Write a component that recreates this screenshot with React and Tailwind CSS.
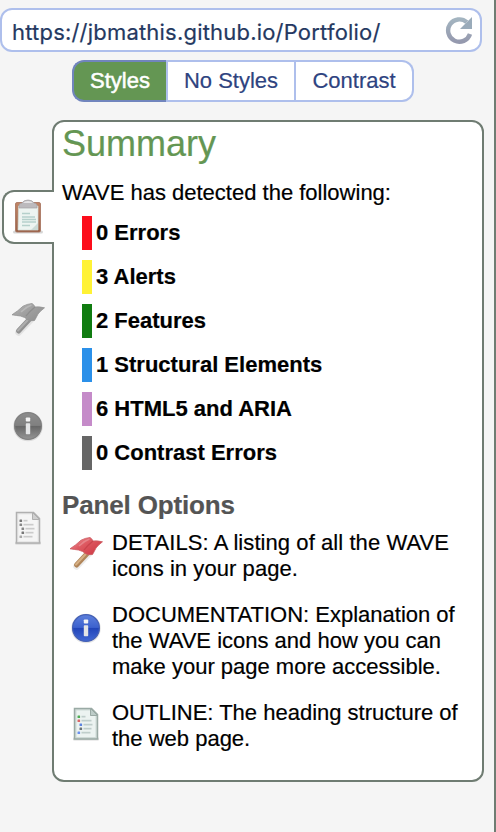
const stats = [
  { label: '0 Errors', color: 'bg-[#fc0d1b]' },
  { label: '3 Alerts', color: 'bg-[#fff235]' },
  { label: '2 Features', color: 'bg-[#107c10]' },
  { label: '1 Structural Elements', color: 'bg-[#2b90e9]' },
  { label: '6 HTML5 and ARIA', color: 'bg-[#c58bc9]' },
  { label: '0 Contrast Errors', color: 'bg-[#666666]' },
];

function Clipboard() {
  return (
    <svg width="32" height="36" viewBox="0 0 32 36">
      <defs>
        <linearGradient id="board" x1="0" y1="0" x2="0" y2="1">
          <stop offset="0" stopColor="#c18668" />
          <stop offset="1" stopColor="#9a6248" />
        </linearGradient>
      </defs>
      <rect x="1" y="31.500" width="30" height="3" rx="1.500" fill="#000" opacity=".16" />
      <rect x="3.500" y="3.500" width="25" height="29.500" rx="1.500" fill="url(#board)" stroke="#a5705a" strokeWidth=".8" />
      <path d="M6.500 7h19.500v24h-20z" fill="#edf4f1" stroke="#d5ddd9" strokeWidth=".7" />
      <path d="M26 24v7h-7z" fill="#cbdad6" />
      <path d="M7 9V6.500q0-2 3-2.500 1.500-3 6-3t6 3q3 .5 3 2.500V9z" fill="#bcbabd" stroke="#a5a1a4" strokeWidth=".7" />
      <path d="M11 4q1.500-2 5-2t5 2z" fill="#e4e3e5" />
      <path d="M10 14.500h8M10 18h13M10 20.500h14M10 23h14M10 26.500h8" stroke="#b5d0cb" strokeWidth="1.500" />
    </svg>
  );
}

function Flag({ gray = false }) {
  const id = gray ? 'flag-gray' : 'flag-red';
  return (
    <svg width="36" height="34" viewBox="0 0 36 34">
      <defs>
        <linearGradient id={id} x1="0" y1="0" x2="1" y2=".8">
          <stop offset="0" stopColor={gray ? '#bababa' : '#ef9a9e'} />
          <stop offset=".45" stopColor={gray ? '#a2a2a2' : '#de5a62'} />
          <stop offset="1" stopColor={gray ? '#909090' : '#cf3a45'} />
        </linearGradient>
      </defs>
      <path d="M8.500 30.500 23 15.500" stroke="#000" strokeWidth="6.500" strokeLinecap="round" opacity=".07" />
      <path d="M8.500 29 22 14.500" stroke={gray ? '#919191' : '#b08559'} strokeWidth="5" strokeLinecap="round" />
      <path d="M8 28.500 21 14.500" stroke={gray ? '#adadad' : '#d6b084'} strokeWidth="2" strokeLinecap="round" />
      <path d="M2 12.800Q8 9 13 4.200 17 2 22 1.500q2 1 3 3.500 4.500-.5 9.500.8-4 3-6.500 6.200-1.500 3-3.500 6.500-3.500.5-6.500-.5-3-3-7.500-4Q6.500 13.500 2 12.800Z" fill={`url(#${id})`} stroke={gray ? '#939393' : '#cb5a61'} strokeWidth=".8" strokeLinejoin="round" />
      <path d="M25 5Q20 9 16 14" fill="none" stroke={gray ? '#7b7b7b' : '#b9333d'} strokeWidth="1.200" opacity=".5" />
      <path d="M21.500 3Q16 5 11 10" fill="none" stroke="#fff" strokeWidth="1.500" opacity=".22" />
    </svg>
  );
}

function Info({ gray = false }) {
  const id = gray ? 'info-gray' : 'info-blue';
  return (
    <svg width="32" height="32" viewBox="0 0 32 32">
      <defs>
        <linearGradient id={id} x1="0" y1="0" x2="0" y2="1">
          <stop offset="0" stopColor={gray ? '#8d8d8d' : '#5d80dc'} />
          <stop offset=".48" stopColor={gray ? '#808080' : '#3c61ce'} />
          <stop offset=".5" stopColor={gray ? '#666' : '#2144b8'} />
          <stop offset="1" stopColor={gray ? '#969696' : '#4269d5'} />
        </linearGradient>
      </defs>
      <circle cx="16" cy="16.500" r="14.800" fill="#000" opacity=".1" />
      <circle cx="16" cy="16" r="13.400" fill={`url(#${id})`} stroke={gray ? '#808080' : '#4460b5'} strokeWidth="1.300" />
      <rect x="13.800" y="7.500" width="4.400" height="4" rx=".8" fill="#f4f4f4" />
      <rect x="13.800" y="13.300" width="4.400" height="11" rx=".7" fill="#e4e5e6" />
    </svg>
  );
}

function Outline({ gray = false }) {
  const edge = gray ? '#b0b0b0' : '#9aaaa5';
  const dots = gray
    ? ['#777', '#888', '#888', '#777', '#aaa']
    : ['#50ad57', '#d96868', '#5d84df', '#6b7477', '#6b91ef'];
  const rows = [[5.5, 10.5, 7], [5.5, 14.5, 13], [7.5, 18.5, 12], [7.5, 22.5, 11], [5.5, 26.5, 12]];
  return (
    <svg width="28" height="36" viewBox="0 0 28 36">
      <rect x="1" y="31.500" width="26" height="3" rx="1" fill="#000" opacity=".14" />
      <path d="M2.500 2.500h17l6 6v24.500h-23z" fill={gray ? '#e8e8e8' : '#cfdad7'} stroke={edge} strokeWidth="1.500" />
      <path d="M4.500 4.500H18v5.500h5.500v21H4.500z" fill={gray ? '#f5f5f5' : '#ecf3f1'} />
      <path d="M18.500 2.500v7h7z" fill={gray ? '#d0d0d0' : '#bdccc8'} stroke={edge} />
      {rows.map(([x, y, w], i) => (
        <g key={y}>
          <rect x={x} y={y - 1} width="2.600" height="2.400" rx=".5" fill={dots[i]} />
          <rect x={x + 4} y={y - 0.7} width={w - 3} height="1.700" fill={gray ? '#cbcbcb' : '#bfcecb'} />
        </g>
      ))}
    </svg>
  );
}

function Reload() {
  return (
    <svg width="30" height="30" viewBox="0 0 30 30">
      <defs>
        <linearGradient id="reload" x1="0" y1="0" x2="0" y2="1">
          <stop offset="0" stopColor="#a3b4c0" />
          <stop offset="1" stopColor="#9599ae" />
        </linearGradient>
      </defs>
      <path d="M22.800 7.200A11.200 11.200 0 1 0 26 19" fill="none" stroke="url(#reload)" strokeWidth="4.400" />
      <path d="M28 2V14H16z" fill="#9aabba" />
    </svg>
  );
}

const options = [
  { lines: ['DETAILS: A listing of all the WAVE', 'icons in your page.'], icon: <Flag />, offset: 'pt-[6px]', tracking: 'tracking-[0.07px]' },
  { lines: ['DOCUMENTATION: Explanation of', 'the WAVE icons and how you can', 'make your page more accessible.'], icon: <Info />, offset: 'pt-[10px]', tracking: '' },
  { lines: ['OUTLINE: The heading structure of', 'the web page.'], icon: <Outline />, offset: 'pt-[6px]', tracking: '' },
];

export default function App() {
  return (
    <div className="flex h-[832px] w-[496px] flex-col overflow-hidden border-r-2 border-[#6f7c72] bg-[#f5f5f5] pt-2 font-['Liberation_Sans',Arial,sans-serif] text-[22px] leading-[26px] text-black">
      <div className="flex h-11 w-[482px] items-center justify-between rounded-xl border-2 border-[#aebfec] bg-white pr-[6px] pl-[10px]">
        <span className="pt-[3px] font-[Inter,sans-serif] text-[22px] tracking-[0.2px] whitespace-nowrap text-[#243861] [-webkit-text-stroke:0.2px_#243861]">https://jbmathis.github.io/Portfolio/</span>
        <Reload />
      </div>
      <div className="mt-2 ml-[72px] flex h-[42px] w-[342px] text-[#2e4380]">
        <button className="w-[94px] rounded-l-xl border-2 border-r-0 border-[#7185bd] bg-[#649653] text-white [-webkit-text-stroke:0.5px_white]">Styles</button>
        <button className="w-[130px] border-2 border-[#aebfec] bg-white [-webkit-text-stroke:0.2px_#2e4380]">No Styles</button>
        <button className="w-[118px] rounded-r-xl border-2 border-l-0 border-[#aebfec] bg-white [-webkit-text-stroke:0.2px_#2e4380]">Contrast</button>
      </div>
      <div className="mt-[18px] flex h-[662px]">
        <nav className="z-10 -mr-[2px] flex w-[54px] flex-col pt-[70px] pl-[2px]">
          <div className="flex h-[54px] items-center justify-center rounded-l-xl border-2 border-r-0 border-[#6f7c72] bg-white pr-[2px]"><Clipboard /></div>
          <div className="mt-[58px] flex h-[34px] justify-center"><Flag gray /></div>
          <div className="mt-[74px] flex h-8 justify-center pr-px"><Info gray /></div>
          <div className="mt-[68px] flex h-9 justify-center"><Outline gray /></div>
        </nav>
        <main className="w-[432px] rounded-xl border-2 border-[#6f7c72] bg-white pl-2 [-webkit-text-stroke:0.2px_currentColor]">
          <h1 className="h-[42px] text-[36px] leading-[44px] text-[#649653]">Summary</h1>
          <p className="mt-[16px] whitespace-nowrap">WAVE has detected the following:</p>
          <ul className="mt-[10px] ml-5 flex flex-col gap-[10px] font-bold">
            {stats.map((s) => (
              <li key={s.label} className="flex h-[34px] items-center gap-1">
                <span className={`h-full w-[10px] ${s.color}`} />
                <span className="whitespace-nowrap">{s.label}</span>
              </li>
            ))}
          </ul>
          <h2 className="mt-[20px] h-[30px] text-[26px] leading-[30px] font-bold tracking-[-0.15px] text-[#545454]">Panel Options</h2>
          <div className="mt-[10px] flex flex-col gap-5">
            {options.map((o) => (
              <div key={o.lines[0]} className="flex">
                <div className={`flex w-[50px] shrink-0 justify-center pr-[2px] ${o.offset}`}>
                  <div className="-mb-4">{o.icon}</div>
                </div>
                <p className={`whitespace-nowrap ${o.tracking}`}>
                  {o.lines.map((line) => <span key={line} className="block">{line}</span>)}
                </p>
              </div>
            ))}
          </div>
        </main>
      </div>
    </div>
  );
}
